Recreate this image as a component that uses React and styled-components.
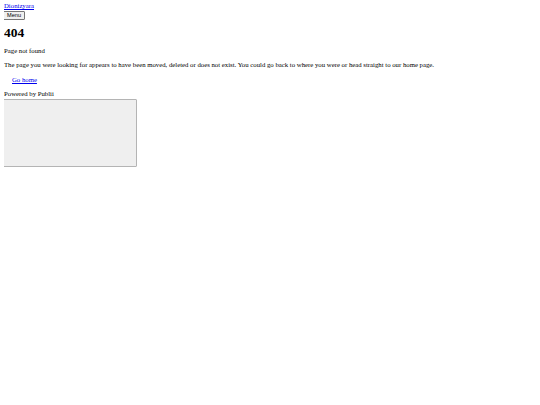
import React from "react";
import styled, { createGlobalStyle } from "styled-components";

const Global = createGlobalStyle`
  html, body {
    background: #fff;
  }
  body {
    margin: 2px 4px;
    font-family: "Liberation Serif", "Times New Roman", serif;
    font-size: 6.75px;
    line-height: 1.15;
    color: #000;
  }
`;

const Header = styled.header`
  display: flex;
  flex-direction: column;
  align-items: flex-start;
`;

const Logo = styled.a`
  color: #0000ee;
  text-decoration: underline;
`;

const MenuButton = styled.button`
  font-family: "Liberation Sans", Arial, sans-serif;
  font-size: 5.6px;
  line-height: 1;
  padding: 1px 3px;
  margin: 1px 0 0 -1px;
  background: #efefef;
  border: 1px solid #767676;
  border-radius: 1px;
  color: #000;
`;

const Main = styled.main`
  display: block;
`;

const Title = styled.h1`
  font-size: 13.5px;
  font-weight: bold;
  margin: 5px 0 6px;
`;

const Text = styled.p`
  margin: 0 0 6.7px;
`;

const HomeLink = styled.a`
  display: inline-block;
  margin: 0 0 6.7px 8px;
  color: #0000ee;
  text-decoration: underline;
`;

const Footer = styled.footer`
  display: flex;
  flex-direction: column;
  align-items: flex-start;
`;

const Frame = styled.div`
  width: 132px;
  height: 66px;
  margin: 1px 0 0 -1px;
  background: #efefef;
  border: 1px solid #b4b4b4;
  border-radius: 1px;
`;

export default function App() {
  return (
    <>
      <Global />
      <Header>
        <Logo href="#">Dionizyara</Logo>
        <MenuButton>Menu</MenuButton>
      </Header>
      <Main>
        <Title>404</Title>
        <Text>Page not found</Text>
        <Text>
          The page you were looking for appears to have been moved, deleted or
          does not exist. You could go back to where you were or head straight
          to our home page.
        </Text>
        <HomeLink href="#">Go home</HomeLink>
      </Main>
      <Footer>
        <span>Powered by Publii</span>
        <Frame />
      </Footer>
    </>
  );
}
